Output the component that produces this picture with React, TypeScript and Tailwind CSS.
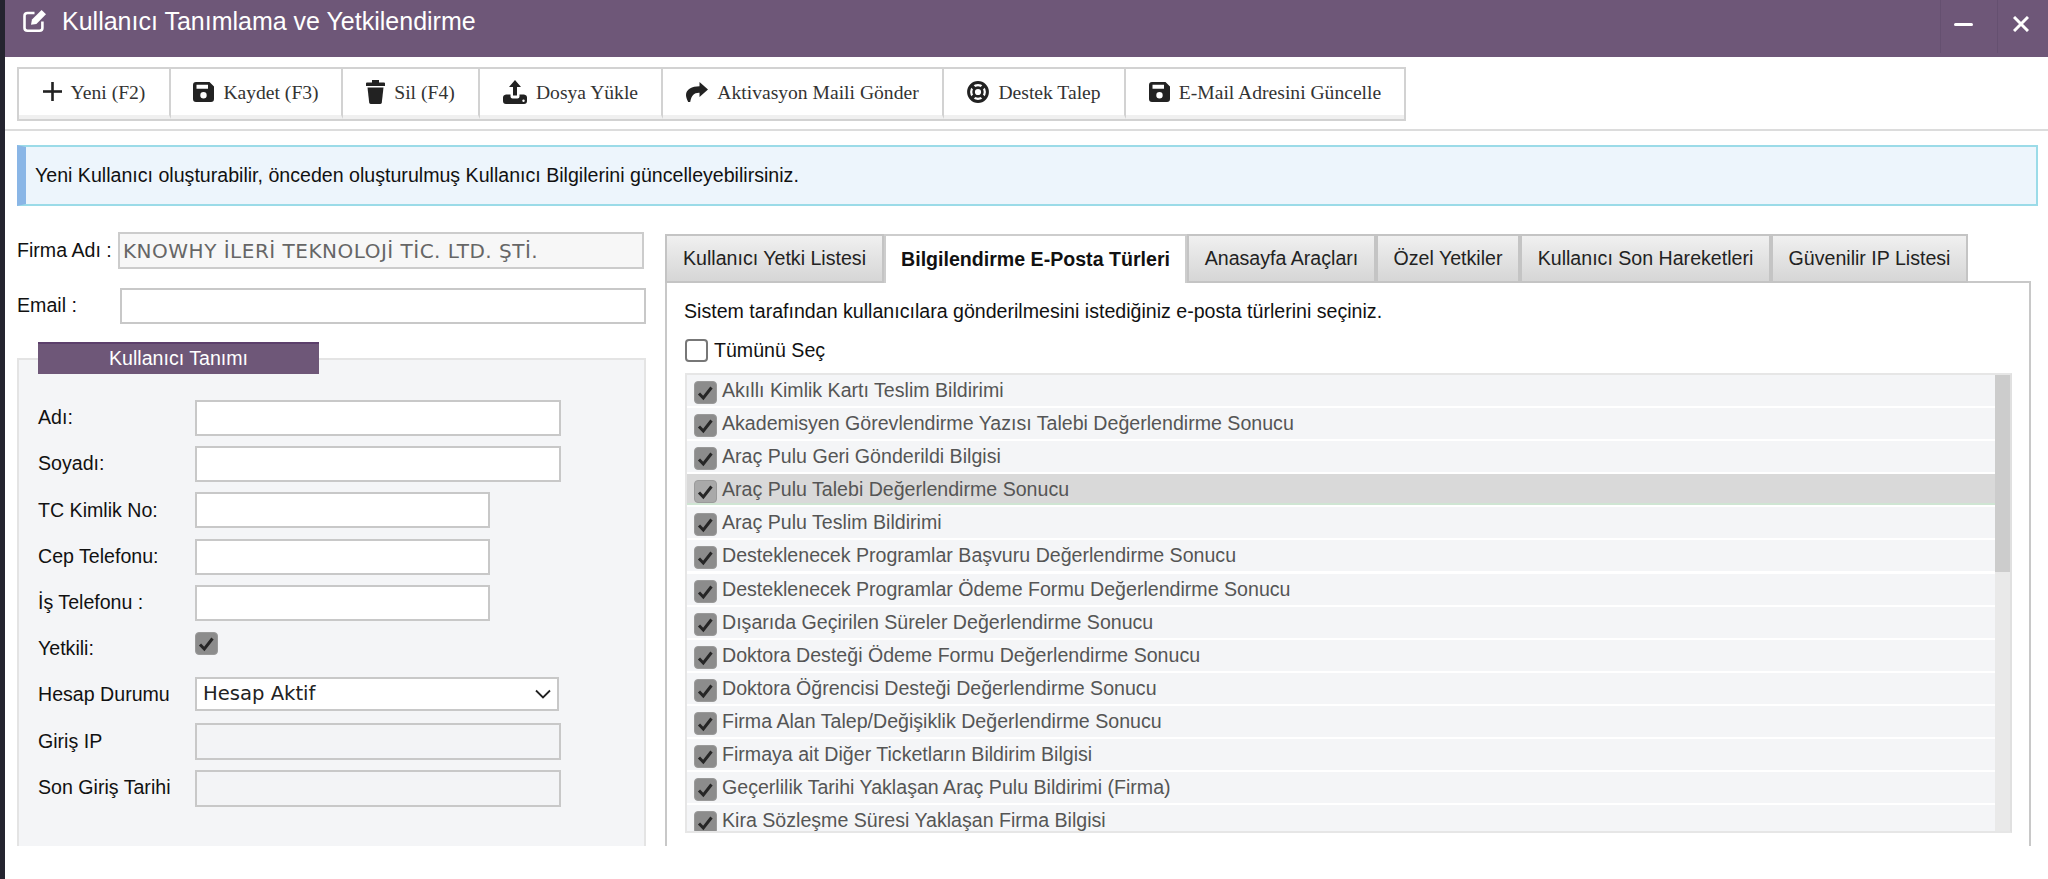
import React from "react";

function Plus() {
  return (
    <svg width="19" height="19" viewBox="0 0 19 19" fill="#222">
      <rect x="8.2" y="0" width="2.6" height="19" />
      <rect x="0" y="8.2" width="19" height="2.6" />
    </svg>
  );
}

function SaveIcon() {
  return (
    <svg width="21" height="20" viewBox="0 0 21 20">
      <path fillRule="evenodd" fill="#222" d="M3 0 H16.5 L21 4.5 V17 Q21 20 18 20 H3 Q0 20 0 17 V3 Q0 0 3 0 Z M3.5 2.8 V6.8 H15 V2.8 Z M10.5 10 A3.2 3.2 0 1 0 10.5 16.4 A3.2 3.2 0 1 0 10.5 10 Z" />
    </svg>
  );
}

function TrashIcon() {
  return (
    <svg width="19" height="24" viewBox="0 0 19 24" fill="#222">
      <path d="M6 0 H13 V2.5 H18 Q19 2.5 19 3.5 V6 H0 V3.5 Q0 2.5 1 2.5 H6 Z" />
      <path d="M1.5 7.5 H17.5 L15.8 22.5 Q15.6 24 14 24 H5 Q3.4 24 3.2 22.5 Z" />
    </svg>
  );
}

function UploadIcon() {
  return (
    <svg width="24" height="24" viewBox="0 0 24 24">
      <path fill="#222" d="M12 0 L18 7 H14 V15.5 H10 V7 H6 Z" />
      <path fill="#222" d="M0 17.5 Q0 15 3 14.5 H7.5 V16.5 Q7.5 18.5 9.5 18.5 H14.5 Q16.5 18.5 16.5 16.5 V14.5 H21 Q24 15 24 17.5 V21 Q24 24 21 24 H3 Q0 24 0 21 Z" />
      <circle cx="20.5" cy="20.8" r="1.2" fill="#fff" />
    </svg>
  );
}

function ShareIcon() {
  return (
    <svg width="22" height="20" viewBox="0 0 22 20">
      <path fill="#222" d="M13.5 0 L22 7.5 L13.5 15 V10.8 C8 10.6 5.5 13.5 4.2 20 H2.2 C0.8 17 0 15 0 13 C0 7 6 4.2 13.5 4.2 Z" />
    </svg>
  );
}

function RingIcon() {
  return (
    <svg width="22" height="22" viewBox="0 0 22 22" fill="none" stroke="#222">
      <circle cx="11" cy="11" r="9.4" strokeWidth="3" />
      <circle cx="11" cy="11" r="4.4" strokeWidth="2.6" />
      <path d="M4.5 4.5 L8 8 M17.5 4.5 L14 8 M4.5 17.5 L8 14 M17.5 17.5 L14 14" strokeWidth="3.2" />
    </svg>
  );
}

function EditIcon() {
  return (
    <svg width="24" height="23" viewBox="0 0 24 23" fill="none">
      <path d="M11.5 4 H4.5 Q1.5 4 1.5 7 V19 Q1.5 21.7 4.5 21.7 H16.5 Q19.4 21.7 19.4 19 V12.5" stroke="#fff" strokeWidth="2.6" />
      <path d="M8 15.8 L9 10.5 L18.6 0.9 L23 5.3 L13.4 14.9 Z" fill="#fff" />
    </svg>
  );
}

function Check({ light }: { light?: boolean }) {
  return (
    <span
      className={`flex h-[23px] w-[23px] shrink-0 items-center justify-center rounded-[4px] border border-[#9a9a9a] ${
        light ? "bg-[#a9a9a9]" : "bg-[#8c8c8c]"
      }`}
    >
      <svg width="21" height="21" viewBox="0 0 21 21" fill="none">
        <path d="M4 11.5 L8.3 16 L16.5 5.5" stroke="#262626" strokeWidth="3" />
      </svg>
    </span>
  );
}

const tools: { w: string; label: string; icon: React.ReactNode }[] = [
  { w: "w-[152px] border-r-2", label: "Yeni (F2)", icon: <Plus /> },
  { w: "w-[172px] border-r-2", label: "Kaydet (F3)", icon: <SaveIcon /> },
  { w: "w-[137px] border-r-2", label: "Sil (F4)", icon: <TrashIcon /> },
  { w: "w-[183px] border-r-2", label: "Dosya Yükle", icon: <UploadIcon /> },
  { w: "w-[281px] border-r-2", label: "Aktivasyon Maili Gönder", icon: <ShareIcon /> },
  { w: "w-[182px] border-r-2", label: "Destek Talep", icon: <RingIcon /> },
  { w: "w-[278px]", label: "E-Mail Adresini Güncelle", icon: <SaveIcon /> },
];

const tabs = [
  { w: "w-[219px]", label: "Kullanıcı Yetki Listesi" },
  { w: "w-[303px]", label: "Bilgilendirme E-Posta Türleri", active: true },
  { w: "w-[189px]", label: "Anasayfa Araçları" },
  { w: "w-[144px]", label: "Özel Yetkiler" },
  { w: "w-[251px]", label: "Kullanıcı Son Hareketleri" },
  { w: "w-[197px]", label: "Güvenilir IP Listesi" },
];

const rows = [
  "Akıllı Kimlik Kartı Teslim Bildirimi",
  "Akademisyen Görevlendirme Yazısı Talebi Değerlendirme Sonucu",
  "Araç Pulu Geri Gönderildi Bilgisi",
  "Araç Pulu Talebi Değerlendirme Sonucu",
  "Araç Pulu Teslim Bildirimi",
  "Desteklenecek Programlar Başvuru Değerlendirme Sonucu",
  "Desteklenecek Programlar Ödeme Formu Değerlendirme Sonucu",
  "Dışarıda Geçirilen Süreler Değerlendirme Sonucu",
  "Doktora Desteği Ödeme Formu Değerlendirme Sonucu",
  "Doktora Öğrencisi Desteği Değerlendirme Sonucu",
  "Firma Alan Talep/Değişiklik Değerlendirme Sonucu",
  "Firmaya ait Diğer Ticketların Bildirim Bilgisi",
  "Geçerlilik Tarihi Yaklaşan Araç Pulu Bildirimi (Firma)",
  "Kira Sözleşme Süresi Yaklaşan Firma Bilgisi",
];

function Field({ label, children }: { label: string; children: React.ReactNode }) {
  return (
    <div className="flex h-[46.2px] items-start">
      <div className="flex h-[36px] w-[157px] shrink-0 items-center text-[19.6px] leading-none text-[#111]">{label}</div>
      {children}
    </div>
  );
}

const inputLong = "block h-[36px] w-[366px] border-2 border-[#c8c8c8] bg-white";
const inputShort = "block h-[36px] w-[295px] border-2 border-[#c8c8c8] bg-white";
const inputOff = "block h-[37px] w-[366px] border-2 border-[#c8c8c8] bg-[#f3f4f6]";

export default function App() {
  return (
    <div className="flex h-[879px] w-[2048px] overflow-hidden bg-white font-['Liberation_Sans',Arial,sans-serif]">
      <div className="w-[5px] shrink-0 bg-[#24242f]" />
      <div className="flex min-w-0 flex-1 flex-col">
        <header className="flex h-[57px] shrink-0 bg-[#6e5778] text-white">
          <div className="flex flex-1 items-start pl-[18px] pt-[9px]">
            <EditIcon />
            <span className="ml-[15px] -mt-[1px] text-[25px] leading-[26px]">Kullanıcı Tanımlama ve Yetkilendirme</span>
          </div>
          <div className="flex h-[53px] w-[57px] items-center border-l border-[#655070] pl-[13px]">
            <span className="mb-[5px] block h-[3px] w-[19px] rounded-sm bg-white" />
          </div>
          <div className="flex h-[53px] w-[51px] items-start border-l border-[#655070] pl-[15px] pt-[16px]">
            <svg width="16" height="16" viewBox="0 0 16 16" stroke="white" strokeWidth="3">
              <path d="M1 1 L15 15 M15 1 L1 15" />
            </svg>
          </div>
        </header>

        <div className="ml-[12px] mt-[10px] flex h-[54px] w-fit border-2 border-[#d2d2d2] font-['Liberation_Serif',serif] text-[19.6px] text-[#333]">
          {tools.map((t) => (
            <div
              key={t.label}
              className={`flex items-center justify-center gap-[9px] border-b-4 border-b-[#f0f0f0] border-r-[#d2d2d2] pt-[2px] ${t.w}`}
            >
              <span className="mb-[3px] block">{t.icon}</span>
              <span className="whitespace-nowrap">{t.label}</span>
            </div>
          ))}
        </div>

        <div className="mt-[8px] h-[2px] shrink-0 bg-[#dcdcdc]" />

        <div className="ml-[12px] mr-[10px] mt-[14px] flex h-[61px] shrink-0 items-center border-y-2 border-r-2 border-[#9bdbe8] border-l-[9px] border-l-[#8ab6e6] bg-[#edf5fc] pl-[9px] text-[19.6px] text-[#111]">
          Yeni Kullanıcı oluşturabilir, önceden oluşturulmuş Kullanıcı Bilgilerini güncelleyebilirsiniz.
        </div>

        <div className="ml-[12px] mt-[26px] flex h-[614px] items-start">
          <div className="w-[629px] shrink-0">
            <div className="flex h-[37px] items-center">
              <span className="w-[101px] whitespace-nowrap text-[19.6px] leading-none text-[#111]">Firma Adı :</span>
              <div className="flex h-[37px] w-[526px] items-center border-2 border-[#cccccc] bg-[#f7f7f7] pl-[3px] font-['DejaVu_Sans',sans-serif] text-[20px] tracking-[0.5px] text-[#666]">
                KNOWHY İLERİ TEKNOLOJİ TİC. LTD. ŞTİ.
              </div>
            </div>
            <div className="mt-[19px] flex h-[36px] items-center">
              <span className="w-[103px] text-[19.6px] leading-none text-[#111]">Email :</span>
              <div className="h-[36px] w-[526px] border-2 border-[#c8c8c8] bg-white" />
            </div>

            <div className="mt-[34px] h-[488px] border-x-2 border-t-2 border-[#e4e4e4] bg-[#f4f5f7]">
              <div className="relative ml-[19px] -mt-[18px] flex h-[32px] w-[281px] items-center justify-center border-t-2 border-t-[#5c3f6b] bg-[#6e5778] text-[19.6px] leading-none text-white">
                Kullanıcı Tanımı
              </div>
              <div className="ml-[19px] mt-[26px]">
                <Field label="Adı:"><div className={inputLong} /></Field>
                <Field label="Soyadı:"><div className={inputLong} /></Field>
                <Field label="TC Kimlik No:"><div className={inputShort} /></Field>
                <Field label="Cep Telefonu:"><div className={inputShort} /></Field>
                <Field label="İş Telefonu :"><div className={inputShort} /></Field>
                <Field label="Yetkili:">
                  <div className="pt-[1px]"><Check /></div>
                </Field>
                <Field label="Hesap Durumu">
                  <div className="flex h-[34px] w-[364px] items-center justify-between border-2 border-[#c8c8c8] bg-white pl-[6px] pr-[6px] font-['DejaVu_Sans',sans-serif] text-[19.6px] text-[#222]">
                    Hesap Aktif
                    <svg width="16" height="10" viewBox="0 0 16 10" fill="none" stroke="#222" strokeWidth="1.8">
                      <path d="M1 1.5 L8 8.5 L15 1.5" />
                    </svg>
                  </div>
                </Field>
                <Field label="Giriş IP"><div className={inputOff} /></Field>
                <Field label="Son Giriş Tarihi"><div className={inputOff} /></Field>
              </div>
            </div>
          </div>

          <div className="ml-[19px] w-[1368px] shrink-0">
            <div className="mt-[2px] flex h-[49px] items-stretch">
              {tabs.map((t) => (
                <div
                  key={t.label}
                  className={`flex items-center justify-center whitespace-nowrap text-[19.6px] leading-none ${t.w} ${
                    t.active
                      ? "border-x-2 border-t-2 border-[#cdcdcd] bg-white font-bold text-[#111]"
                      : "border-x-2 border-y-2 border-[#c4c4c4] bg-gradient-to-b from-[#f0f0f0] to-[#d6d6d6] text-[#222]"
                  }`}
                >
                  {t.label}
                </div>
              ))}
            </div>
            <div className="-mt-[2px] h-[565px] w-[1366px] border-x-2 border-t-2 border-[#c8c8c8] bg-white">
              <p className="ml-[17px] mt-[18px] text-[19.6px] leading-[20px] text-[#111]">
                Sistem tarafından kullanıcılara gönderilmesini istediğiniz e-posta türlerini seçiniz.
              </p>
              <div className="ml-[18px] mt-[18px] flex h-[23px] items-center gap-[6px] text-[19.6px] text-[#111]">
                <span className="h-[23px] w-[23px] rounded-[4px] border-2 border-[#777] bg-white" />
                Tümünü Seç
              </div>
              <div className="ml-[18px] mt-[11px] flex h-[460px] w-[1327px] overflow-hidden border-2 border-[#e6e6e6] border-r-[#e0e0e0]">
                <div className="min-w-0 flex-1">
                  {rows.map((r, i) => (
                    <div
                      key={r}
                      className={`mb-[2.1px] flex h-[31px] items-start gap-[5px] pl-[7px] text-[19.6px] leading-[30px] text-[#555] ${
                        i === 3 ? "border-b-2 border-b-[#cfe5d3] bg-[#d9d9d9]" : "bg-[#f4f5f7]"
                      }`}
                    >
                      <span className="mt-[6px]"><Check light={i === 3} /></span>
                      <span className="whitespace-nowrap">{r}</span>
                    </div>
                  ))}
                </div>
                <div className="w-[15px] shrink-0 bg-[#e9e9e9]">
                  <div className="h-[197px] bg-[#cccccc]" />
                </div>
              </div>
            </div>
          </div>
        </div>
      </div>
    </div>
  );
}
